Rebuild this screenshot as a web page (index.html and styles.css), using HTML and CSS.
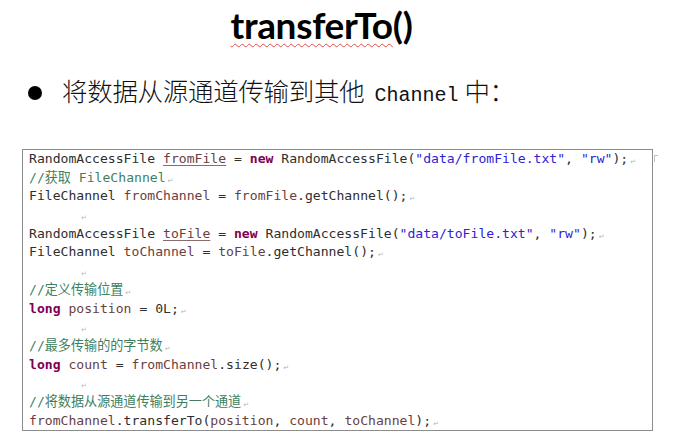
FILE: index.html
```html
<!DOCTYPE html>
<html lang="zh-CN">
<head>
<meta charset="utf-8">
<link rel="stylesheet" href="styles.css">
</head>
<body>
<div class="slide">
  <h1 class="title"><span class="spell">transferTo</span>()</h1>
  <div class="bullet-row">
    <span class="dot"></span>
    <p class="bullet-text">将数据从源通道传输到其他<span class="latin">Channel</span>中：</p>
  </div>
  <div class="code-wrap">
    <div class="code">
      <div class="ln">RandomAccessFile <span class="var decl">fromFile</span> = <span class="kw">new</span> RandomAccessFile(<span class="str">"data/fromFile.txt"</span>, <span class="str">"rw"</span>);<span class="pm">↵</span></div>
      <div class="ln"><span class="cm">//获取 FileChannel</span><span class="pm">↵</span></div>
      <div class="ln">FileChannel <span class="var">fromChannel</span> = <span class="var">fromFile</span>.getChannel();<span class="pm">↵</span></div>
      <div class="ln empty"><span class="pm">↵</span></div>
      <div class="ln">RandomAccessFile <span class="var decl">toFile</span> = <span class="kw">new</span> RandomAccessFile(<span class="str">"data/toFile.txt"</span>, <span class="str">"rw"</span>);<span class="pm">↵</span></div>
      <div class="ln">FileChannel <span class="var">toChannel</span> = <span class="var">toFile</span>.getChannel();<span class="pm">↵</span></div>
      <div class="ln empty"><span class="pm">↵</span></div>
      <div class="ln"><span class="cm">//定义传输位置</span><span class="pm">↵</span></div>
      <div class="ln"><span class="kw">long</span> <span class="var">position</span> = 0L;<span class="pm">↵</span></div>
      <div class="ln empty"><span class="pm">↵</span></div>
      <div class="ln"><span class="cm">//最多传输的的字节数</span><span class="pm">↵</span></div>
      <div class="ln"><span class="kw">long</span> <span class="var">count</span> = <span class="var">fromChannel</span>.size();<span class="pm">↵</span></div>
      <div class="ln empty"><span class="pm">↵</span></div>
      <div class="ln"><span class="cm">//将数据从源通道传输到另一个通道</span><span class="pm">↵</span></div>
      <div class="ln"><span class="var">fromChannel</span>.transferTo(<span class="var">position</span>, <span class="var">count</span>, <span class="var">toChannel</span>);<span class="pm">↵</span></div>
    </div>
    <span class="endmark"></span>
  </div>
</div>
</body>
</html>
```
FILE: styles.css
```css
html, body {
  margin: 0;
  padding: 0;
  background: #ffffff;
}

.slide {
  position: relative;
  width: 675px;
  height: 442px;
  display: flex;
  flex-direction: column;
  overflow: hidden;
}

.title {
  margin: 3px 0 0 0;
  padding-right: 32px;
  text-align: center;
  font-family: Lato, "Open Sans", sans-serif;
  font-weight: 700;
  font-size: 37px;
  line-height: 44px;
  color: #000;
  letter-spacing: -0.3px;
}

.spell {
  text-decoration: underline wavy #e34b4b;
  text-decoration-thickness: 1px;
  text-underline-offset: 4px;
}

.bullet-row {
  display: flex;
  align-items: center;
  gap: 20px;
  margin: 30px 0 0 28px;
  height: 32px;
}

.dot {
  width: 14px;
  height: 14px;
  border-radius: 50%;
  background: #000;
  flex: none;
}

.bullet-text {
  margin: 0;
  font-family: "Noto Sans CJK SC", sans-serif;
  font-weight: 300;
  font-size: 25.5px;
  letter-spacing: -0.3px;
  color: #111;
  line-height: 32px;
}

.latin {
  font-family: "Liberation Mono", monospace;
  font-size: 20px;
  letter-spacing: 0;
  margin: 0 6px 0 10px;
}

.code-wrap {
  position: relative;
  margin: 40px 0 0 22px;
  width: 631px;
}

.code {
  border: 1px solid #8c8c8c;
  padding: 0 0 0 6px;
  font-family: "DejaVu Sans Mono", "Noto Sans CJK SC", monospace;
  font-size: 13.1px;
  color: #2e2e2e;
}

.ln {
  height: 18.7px;
  line-height: 18.7px;
  white-space: pre;
}

.ln.empty {
  padding-left: 50px;
}

.kw {
  color: #7f0055;
  font-weight: bold;
}

.str {
  color: #2f22d6;
}

.cm {
  color: #3f7f5f;
}

.var {
  color: #6a3e3e;
}

.decl {
  text-decoration: underline;
  text-decoration-color: #8a6a6a;
  text-underline-offset: 2px;
}

.pm {
  font-family: "DejaVu Sans", sans-serif;
  font-size: 7px;
  color: #b5b5b5;
  margin-left: 2px;
  vertical-align: -1px;
}

.endmark {
  position: absolute;
  top: 6px;
  right: -5px;
  width: 3px;
  height: 6px;
  border-left: 1px solid #c0c0c0;
  border-top: 1px solid #c0c0c0;
}
```
